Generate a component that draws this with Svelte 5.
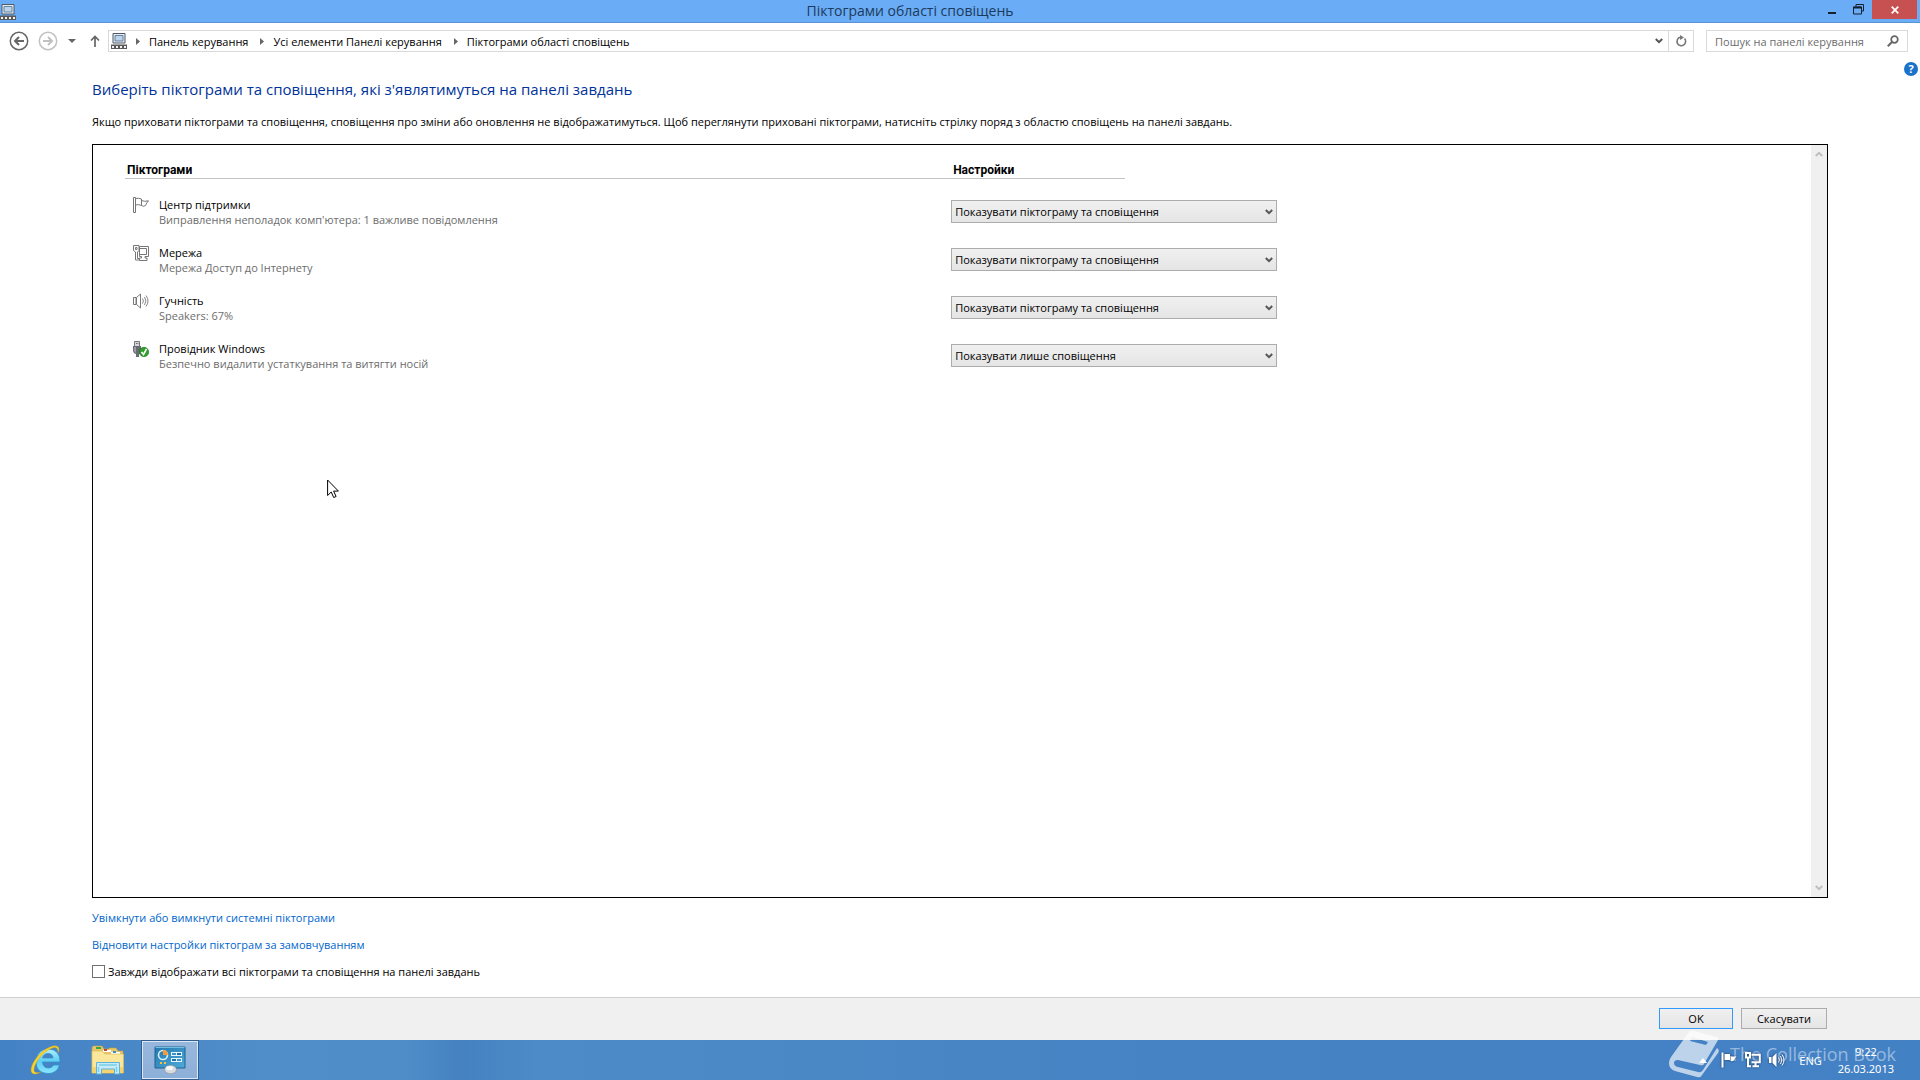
<script lang="ts">
	type Item = { id: string; icon: string; title: string; text: string; value: string };

	const options = [
		'Показувати піктограму та сповіщення',
		'Приховати піктограму та сповіщення',
		'Показувати лише сповіщення'
	];

	const crumbs = ['Панель керування', 'Усі елементи Панелі керування', 'Піктограми області сповіщень'];

	let items = $state<Item[]>([
		{
			id: 'support',
			icon: 'flag',
			title: 'Центр підтримки',
			text: "Виправлення неполадок комп'ютера: 1 важливе повідомлення",
			value: options[0]
		},
		{
			id: 'network',
			icon: 'network',
			title: 'Мережа',
			text: 'Мережа Доступ до Інтернету',
			value: options[0]
		},
		{ id: 'volume', icon: 'speaker', title: 'Гучність', text: 'Speakers: 67%', value: options[0] },
		{
			id: 'explorer',
			icon: 'usb',
			title: 'Провідник Windows',
			text: 'Безпечно видалити устаткування та витягти носій',
			value: options[2]
		}
	]);

	let search = $state('');
	let showAll = $state(false);
</script>

{#snippet itemIcon(name: string)}
	<svg class="icon16" viewBox="0 0 16 16" aria-hidden="true">
		{#if name === 'flag'}
			<path class="glyph" d="M.5.5h2v15h-2z" />
			<path class="glyph" d="M8.500 3.500q3 1.500 7 .3-2 2-3 4.700-2 1.500-4 0M2.500 1.500q3-.8 6 .5v6.500q-3-1.500-6-.5z" />
		{:else if name === 'network'}
			<path class="glyph" d="M6.500 1.500h9v10h-3.500v1.500h2v2.500H6.500V13h2v-1.500h-2z" />
			<path class="glyph" d="M7 3.500h6.500v6H7" />
			<path class="glyph" d="M.5.500h5.500v5L4.500 7v6.500h2V15h-4V7L.5 5.500z" />
			<path class="glyph" d="M2.500 2.500h1.500v2H2.500z" />
		{:else if name === 'speaker'}
			<path class="glyph" d="M.5 4.500h2.500v7H.5zM3.500 4.500 7.500 1v14L3.500 11.500z" />
			<path class="wave" d="M9.500 5.500q1.800 2.500 0 5M11.500 4q2.800 4 0 8M13 2.500q4 5.500 0 11" />
		{:else}
			<path d="M1.500.5h5v5h-5z" fill="#d5d7da" stroke="#777" />
			<path d="M3 2.500h.8M4.500 2.500h.8" stroke="#555" />
			<path d="M0 5h8v6q0 2-2 2v3H3v-3q-3-1-3-4z" fill="#696c72" />
			<path d="M1 6h2v6q-2-1-2-3z" fill="#9a9da3" />
			<circle cx="11" cy="11" r="4.700" fill="#2f9e2b" stroke="#1c6b1b" stroke-width=".6" />
			<path d="m8.500 11 2 2.500L13.500 8" fill="none" stroke="#fff" stroke-width="1.600" />
		{/if}
	</svg>
{/snippet}

{#snippet trayIcon(name: string)}
	<svg class="icon16 tray-icon" viewBox="0 0 16 16">
		{#if name === 'flag'}
			<path d="M.5.5h2v15h-2zM3.500 2h5.500v6H3.500zM9.500 4q2.500 1 6 0-1.500 2-2.500 4.500-1.500 1-3.500.5z" fill="#fff" />
		{:else if name === 'network'}
			<path d="M6.500 2.700h8.300v7.600H6.500M10.500 10.500v3.500M7.500 14.300h6.500" class="line" />
			<path d="M1 1h4v4.500H1zM3 5.500v8.800h3" class="line" />
		{:else}
			<path d="M0 5h2.500v6H0zM3.500 5l4-4v14l-4-4z" fill="#fff" />
			<path d="M9.500 5.500q1.800 2.500 0 5M11.500 4q2.800 4 0 8M13 2.500q4 5.500 0 11" class="line thin" />
		{/if}
	</svg>
{/snippet}

{#snippet panelIcon()}
	<svg class="icon16" viewBox="0 0 16 16" aria-hidden="true">
		<path d="M2 .5h12v9.500H2z" fill="#e9eef5" stroke="#4f5966" />
		<path d="M4 2.500h8v5.500H4z" fill="#bcd3ec" stroke="#65829f" />
		<path d="M0 11.500h16V16H0z" fill="#5a5a5a" />
		<path d="M1 13h2v2H1zm4 0h2v2H5zm4 0h2v2H9zm4 0h2v2h-2z" fill="#f4f4f4" />
	</svg>
{/snippet}

{#snippet chevron()}
	<svg class="chevron" viewBox="0 0 8 6" aria-hidden="true">
		<path d="m.8 1 3.200 3.200L7.200 1" />
	</svg>
{/snippet}

<div class="screen">
	<header class="titlebar">
		<div class="title-icon">{@render panelIcon()}</div>
		<h1>Піктограми області сповіщень</h1>
		<div class="window-buttons">
			<button type="button" aria-label="Згорнути">
				<svg width="12" height="12" viewBox="0 0 12 12"><path d="M1 8h8v2H1z" fill="#14222f" /></svg>
			</button>
			<button type="button" aria-label="Відновити">
				<svg width="12" height="12" viewBox="0 0 12 12">
					<path d="M3 2V.5h7.500V7H8M.5 3h8v7h-8z" fill="none" stroke="#14222f" />
					<path d="M.5 3.500h8" stroke="#14222f" stroke-width="2" />
				</svg>
			</button>
			<button type="button" class="close" aria-label="Закрити">
				<svg width="8" height="8" viewBox="0 0 8 8">
					<path d="m.7.7 6.600 6.600M7.300.7.7 7.300" stroke="#fff" stroke-width="1.700" />
				</svg>
			</button>
		</div>
	</header>

	<nav class="navbar">
		<button type="button" class="nav-btn" aria-label="Назад">
			<svg width="20" height="20" viewBox="0 0 20 20" class="round">
				<circle cx="10" cy="10" r="8.700" />
				<path d="M15 10H6m4-4-4 4 4 4" stroke-width="2" />
			</svg>
		</button>
		<button type="button" class="nav-btn forward" aria-label="Уперед">
			<svg width="20" height="20" viewBox="0 0 20 20" class="round">
				<circle cx="10" cy="10" r="8.700" />
				<path d="M5 10h9m-4-4 4 4-4 4" stroke-width="2" />
			</svg>
		</button>
		<button type="button" class="nav-btn recent" aria-label="Останні розташування">
			<svg width="8" height="4" viewBox="0 0 8 4"><path d="M0 0h8L4 4z" fill="#666" /></svg>
		</button>
		<button type="button" class="nav-btn up" aria-label="Вгору">
			<svg width="10" height="12" viewBox="0 0 10 12">
				<path d="M5 12V1.500M1 5.500l4-4 4 4" fill="none" stroke="#666" stroke-width="1.700" />
			</svg>
		</button>
		<div class="address">
			{@render panelIcon()}
			{#each crumbs as crumb}
				<svg class="sep" width="4" height="7" viewBox="0 0 4 7"><path d="M0 0v7l4-3.500z" fill="#666" /></svg>
				<a href="#top">{crumb}</a>
			{/each}
			<button type="button" class="address-btn drop" aria-label="Попередні розташування">{@render chevron()}</button>
			<button type="button" class="address-btn refresh" aria-label="Оновити">
				<svg width="12" height="12" viewBox="0 0 12 12">
					<path d="M9.500 3.500A4.300 4.300 0 1 1 5 2.300" fill="none" stroke="#777" stroke-width="1.600" />
					<path d="M5 0v5l4-2.500z" fill="#777" />
				</svg>
			</button>
		</div>
		<div class="search">
			<input type="search" aria-label="Пошук" placeholder="Пошук на панелі керування" bind:value={search} />
			<svg width="12" height="12" viewBox="0 0 12 12" aria-hidden="true">
				<circle cx="7.500" cy="4.500" r="3.300" fill="none" stroke="#666" stroke-width="1.700" />
				<path d="M5.200 6.800.8 11.200" stroke="#666" stroke-width="2" />
			</svg>
		</div>
	</nav>

	<main>
		<button type="button" class="help" aria-label="Довідка">?</button>
		<h2>Виберіть піктограми та сповіщення, які з'являтимуться на панелі завдань</h2>
		<p class="intro">
			Якщо приховати піктограми та сповіщення, сповіщення про зміни або оновлення не відображатимуться. Щоб
			переглянути приховані піктограми, натисніть стрілку поряд з областю сповіщень на панелі завдань.
		</p>

		<section class="panel">
			<div class="list">
				<div class="row list-head">
					<h3>Піктограми</h3>
					<h3 class="settings-head">Настройки</h3>
				</div>
				{#each items as item (item.id)}
					<div class="row item">
						<div class="about">
							{@render itemIcon(item.icon)}
							<div>
								<label for={item.id}>{item.title}</label>
								<p>{item.text}</p>
							</div>
						</div>
						<div class="select-box">
							<select id={item.id} bind:value={item.value}>
								{#each options as option}
									<option>{option}</option>
								{/each}
							</select>
							{@render chevron()}
						</div>
					</div>
				{/each}
			</div>
			<div class="scrollbar" aria-hidden="true">
				<div class="flip">{@render chevron()}</div>
				{@render chevron()}
			</div>
		</section>

		<a class="link" href="#system-icons">Увімкнути або вимкнути системні піктограми</a>
		<a class="link" href="#restore">Відновити настройки піктограм за замовчуванням</a>
		<label class="check">
			<input type="checkbox" bind:checked={showAll} />
			Завжди відображати всі піктограми та сповіщення на панелі завдань
		</label>
	</main>

	<footer class="actions">
		<button type="button" class="ok">OK</button>
		<button type="button" class="cancel">Скасувати</button>
	</footer>

	<div class="taskbar">
		<button type="button" class="task" aria-label="Internet Explorer">
			<svg width="32" height="32" viewBox="0 0 32 32">
				<defs>
					<linearGradient id="ie" x1="0" y1="0" x2="0" y2="1">
						<stop offset="0" stop-color="#b5f0fd" />
						<stop offset=".5" stop-color="#5dcdf4" />
						<stop offset="1" stop-color="#8ce6fb" />
					</linearGradient>
				</defs>
				<path
					d="M30 18H12.500q.5 6 6 6 3.500 0 5-3h6q-2.500 8.500-11.500 8.500Q6 29 6 17.500 7 5.500 18 5q12 .5 12 13zM12.500 14H23q-.5-4.500-5-4.500T12.500 14z"
					fill="url(#ie)"
					stroke="#2c8fca"
					stroke-width=".7"
				/>
				<path
					d="M28 9C31 3 27 0 20 3 10 7 1 19 1 26c0 5 5 5 10 2-4 1-7 1-7-2C4 19 13 8 21 4.500c5-2 7-1 7 4.500z"
					fill="#f8d32d"
					stroke="#c99a16"
					stroke-width=".4"
				/>
			</svg>
		</button>
		<button type="button" class="task" aria-label="Провідник">
			<svg width="34" height="30" viewBox="0 0 34 30">
				<path d="M1 3q0-2 2-2h8l2 3h5V3h7l2 3h5v22H1z" fill="#e9c769" stroke="#c19d46" stroke-width=".6" />
				<path d="M5 2h5v2H5z" fill="#35a843" />
				<path d="M12 5h8v2h-8z" fill="#fff" />
				<path d="M13 4h3v2h-3z" fill="#c4463a" />
				<path d="M20 7h9v2h-9z" fill="#fff" />
				<path d="M22 6h3v2h-3z" fill="#3c8ec7" />
				<path d="M1 6h10l3 3h18.500v19H1z" fill="#fae79b" stroke="#d7b856" stroke-width=".6" />
				<path d="M1 22h31v6H1z" fill="#f2d472" />
				<path d="M5.500 29V17.500h23V29h-5v-5h-13v5z" fill="#c4ebf7" stroke="#5db3d9" />
				<path d="M8 20h18M7.500 22v5m18-5v5" stroke="#7ccde8" stroke-width="1.500" />
			</svg>
		</button>
		<button type="button" class="task active" aria-label="Панель керування">
			<svg width="32" height="28" viewBox="0 0 32 28">
				<defs>
					<linearGradient id="cp" x1="0" y1="0" x2="1" y2="1">
						<stop offset="0" stop-color="#2477ae" />
						<stop offset="1" stop-color="#4eabd8" />
					</linearGradient>
				</defs>
				<path d="M1 1h30v21H1z" fill="url(#cp)" stroke="#1e6391" />
				<path d="M1.500 1.500h29" stroke="#73bfe4" />
				<circle cx="9" cy="9" r="4.500" fill="none" stroke="#d3effc" stroke-width="1.600" />
				<path d="M9 9V4q5 0 5 5z" fill="#f79938" />
				<path d="M17 6h11v4H17zm0 6h11v4H17z" fill="#e3f5fd" />
				<path d="M18 7h4v2h-4zm5 6h4v2h-4z" fill="#3d91c5" />
				<path d="M23 7h4v2h-4zm-5 6h4v2h-4z" fill="#1e6fa7" />
				<path d="M6 16h2v2H6zm4 0h2v2h-2z" fill="#f8c33b" />
				<ellipse cx="16.500" cy="23.500" rx="6" ry="4.300" fill="#d9dcdf" stroke="#83888e" stroke-width=".6" />
				<ellipse cx="15.500" cy="22" rx="3.500" ry="2" fill="#f7f8f9" />
			</svg>
		</button>

		<div class="watermark">
			<svg width="50" height="48" viewBox="0 0 50 48" aria-hidden="true">
				<path
					fill-rule="evenodd"
					d="M20 2q2-2 5-1l23 6q2 1 1 3L35 34q-1 2-4 1L9 30q-4 0-4 3t4 4l20 5q3 1 5-2l14-22q3 2 1 5L33 45q-1 3-5 2L6 41q-6-2-6-8 0-3 2-6zM23 7l-2 4 16 4 2-3z"
				/>
			</svg>
			<span>The Collection Book</span>
		</div>

		<div class="tray">
			<button type="button" class="tray-up" aria-label="Приховані піктограми">
				<svg width="8" height="5" viewBox="0 0 8 5"><path d="M0 5h8L4 0z" fill="#fff" /></svg>
			</button>
			<button type="button" aria-label="Центр підтримки">{@render trayIcon('flag')}</button>
			<button type="button" aria-label="Мережа">{@render trayIcon('network')}</button>
			<button type="button" aria-label="Гучність">{@render trayIcon('speaker')}</button>
			<span class="lang">ENG</span>
			<div class="clock">
				<span>9:22</span>
				<span>26.03.2013</span>
			</div>
		</div>
	</div>

	<svg class="cursor" width="12" height="20" viewBox="0 0 12 20" aria-hidden="true">
		<path d="M.6 1v15.500l3.600-3.500 2.500 5.500 2.400-1-2.500-5.400h4.800z" fill="#fff" stroke="#000" stroke-width="1" />
	</svg>
</div>

<style>
	:global(body) {
		margin: 0;
		background: #fff;
	}

	.screen {
		position: relative;
		display: flex;
		flex-direction: column;
		min-height: 100vh;
		font-family: 'Open Sans', 'Noto Sans', sans-serif;
		font-size: 11px;
		line-height: 15px;
		color: #000;
	}

	h1,
	h2,
	h3,
	p {
		margin: 0;
		font-weight: 400;
	}

	button,
	input,
	select {
		font: inherit;
		color: inherit;
	}

	button {
		padding: 0;
		border: none;
		background: none;
	}

	svg {
		display: block;
		flex-shrink: 0;
	}

	.icon16 {
		width: 16px;
		height: 16px;
	}

	.chevron {
		width: 8px;
		height: 6px;
		fill: none;
		stroke: #555;
		stroke-width: 2;
	}

	/* title bar */
	.titlebar {
		display: flex;
		height: 22px;
		background: #6aacf5;
		border-bottom: 1px solid #5a93d2;
	}

	.title-icon {
		width: 0;
		padding-top: 4px;
	}

	h1 {
		flex: 1;
		font-size: 14px;
		line-height: 22px;
		text-align: center;
		color: #1b3a5c;
	}

	.window-buttons {
		display: flex;
		padding-right: 3px;
	}

	.window-buttons button {
		display: flex;
		align-items: center;
		justify-content: center;
		width: 26px;
		height: 19px;
	}

	.window-buttons .close {
		width: 45px;
		background: #c75050;
	}

	/* navigation */
	.navbar {
		display: flex;
		align-items: center;
		height: 22px;
		padding: 7px 12px 7px 9px;
	}

	.round {
		fill: none;
		stroke: #666;
		stroke-width: 1.5px;
	}

	.forward {
		margin-left: 9px;
		opacity: 0.4;
	}

	.recent {
		margin-left: 10px;
	}

	.up {
		margin: 0 8px 0 14px;
	}

	.address {
		display: flex;
		flex: 1;
		align-items: center;
		height: 20px;
		padding-left: 2px;
		border: 1px solid #d9d9d9;
	}

	.address a {
		padding-right: 3px;
		color: #000;
		text-decoration: none;
	}

	.sep {
		margin: 0 9px;
	}

	.address-btn {
		display: flex;
		align-items: center;
		justify-content: center;
		align-self: stretch;
	}

	.drop {
		width: 18px;
		margin-left: auto;
	}

	.refresh {
		width: 25px;
		border-left: 1px solid #d9d9d9;
	}

	.search {
		display: flex;
		align-items: center;
		box-sizing: border-box;
		width: 202px;
		height: 22px;
		margin-left: 12px;
		padding: 0 8px;
		border: 1px solid #d9d9d9;
	}

	.search input {
		flex: 1;
		min-width: 0;
		padding: 0;
		border: none;
		outline: none;
		background: none;
	}

	.search input::placeholder {
		color: #6d6d6d;
		opacity: 1;
	}

	/* content */
	main {
		position: relative;
		display: flex;
		flex: 1;
		flex-direction: column;
		align-items: flex-start;
		padding: 20px 92px 18px;
	}

	.help {
		position: absolute;
		top: 3px;
		right: 2px;
		width: 14px;
		height: 14px;
		border-radius: 50%;
		background: #1a72c9;
		color: #fff;
		font-weight: 700;
		line-height: 14px;
	}

	h2 {
		font-size: 15px;
		line-height: 20px;
		color: #003399;
	}

	.intro {
		margin-top: 15px;
	}

	.panel {
		display: flex;
		flex: 1;
		align-self: stretch;
		margin: 15px 0 12px;
		border: 1px solid #000;
	}

	.list {
		flex: 1;
		padding: 18px 0 0 32px;
	}

	.row {
		display: grid;
		grid-template-columns: 49% 326px;
	}

	.list-head {
		margin-bottom: 18px;
	}

	h3 {
		padding-left: 2px;
		border-bottom: 1px solid #c3c3c3;
		font-family: Roboto, sans-serif;
		font-size: 12px;
		font-weight: 700;
	}

	.settings-head {
		width: 172px;
	}

	.item {
		height: 48px;
	}

	.about {
		display: flex;
		gap: 10px;
		padding-left: 8px;
	}

	.about label {
		display: block;
	}

	.about p {
		color: #6d6d6d;
	}

	.glyph {
		fill: #fff;
		stroke: #777;
	}

	.wave {
		fill: none;
		stroke: #888;
	}

	.select-box {
		position: relative;
		height: 23px;
		margin-top: 3px;
	}

	.select-box select {
		width: 100%;
		height: 100%;
		padding: 0 24px 0 3px;
		border: 1px solid #acacac;
		border-radius: 0;
		appearance: none;
		background: linear-gradient(#f0f0f0, #e5e5e5);
	}

	.select-box .chevron {
		position: absolute;
		top: 9px;
		right: 4px;
		pointer-events: none;
	}

	.scrollbar {
		display: flex;
		flex-direction: column;
		justify-content: space-between;
		align-items: center;
		width: 16px;
		padding: 6px 0;
		box-sizing: border-box;
		background: #f0f0f0;
	}

	.scrollbar .chevron {
		stroke: #bfbfbf;
	}

	.flip {
		transform: rotate(180deg);
	}

	.link {
		margin-bottom: 12px;
		color: #0066cc;
		text-decoration: none;
	}

	.check {
		display: flex;
		align-items: center;
		gap: 3px;
	}

	.check input {
		width: 13px;
		height: 13px;
		margin: 0;
		border: 1px solid #707070;
		appearance: none;
		background: #fff;
	}

	.check input:checked {
		background: #707070;
	}

	/* bottom buttons */
	.actions {
		display: flex;
		justify-content: flex-end;
		gap: 8px;
		padding: 10px 93px 11px;
		border-top: 1px solid #d0d0d0;
		background: #f0f0f0;
	}

	.actions button {
		height: 21px;
		border: 1px solid #acacac;
		background: linear-gradient(#f0f0f0, #e5e5e5);
	}

	.actions .ok {
		width: 74px;
		border-color: #3399ff;
	}

	.actions .cancel {
		width: 86px;
	}

	/* taskbar */
	.taskbar {
		position: relative;
		display: flex;
		gap: 4px;
		height: 40px;
		padding-left: 17px;
		background: linear-gradient(90deg, #4482c6, #4f8ec8 14%, #4f8dc8 21%, #4581c1 24%, #4c8bc7 28%, #4683c4 60%, #4381c5);
	}

	.task {
		display: flex;
		align-items: center;
		justify-content: center;
		box-sizing: border-box;
		width: 58px;
		height: 40px;
	}

	.task.active {
		border: 1px solid #2f5f93;
		background: linear-gradient(#98b7dd, #8cafd8);
		box-shadow: inset 0 0 0 1px #dbe7f4;
	}

	.tray {
		position: relative;
		display: flex;
		align-items: center;
		gap: 8px;
		margin-left: auto;
		padding-right: 26px;
		font-family: 'Noto Sans', sans-serif;
		color: #fff;
	}

	.tray-up {
		margin-right: 6px;
	}

	.tray-icon {
		filter: drop-shadow(0 0 1px #17365c);
	}

	.line {
		fill: none;
		stroke: #fff;
		stroke-width: 2px;
	}

	.thin {
		stroke-width: 1px;
	}

	.lang {
		padding: 0 8px 0 6px;
	}

	.clock {
		display: flex;
		flex-direction: column;
		align-items: center;
		line-height: 17px;
	}

	.watermark {
		position: absolute;
		right: 24px;
		bottom: 2px;
		display: flex;
		align-items: center;
		gap: 11px;
		font-size: 18px;
		line-height: 24px;
		color: #ffffff73;
		pointer-events: none;
	}

	.watermark svg {
		fill: #ffffffa6;
	}

	.cursor {
		position: absolute;
		top: 479px;
		left: 327px;
	}
</style>
